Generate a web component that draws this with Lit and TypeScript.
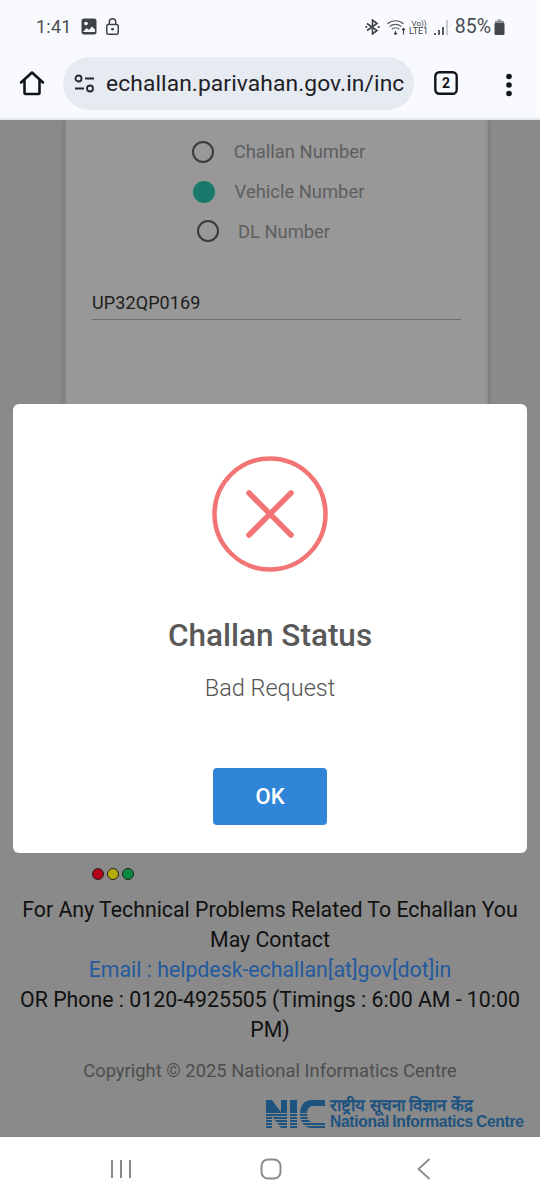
import { LitElement, html, css, svg } from "lit";
import { customElement } from "lit/decorators.js";

@customElement("app-root")
export class AppRoot extends LitElement {
  static styles = css`
    :host { display: block; width: 540px; height: 1200px; font-family: Roboto, sans-serif; background: #fff; overflow: hidden; }
    .app { display: flex; flex-direction: column; height: 1200px; }
    .status { height: 50px; background: #f8fafe; display: flex; align-items: center; justify-content: space-between; padding: 3px 35px 0 36px; color: #4a4d52; box-sizing: border-box; flex: none; font-size: 18px; }
    .status .l, .status .r { display: flex; align-items: center; }
    .status .time { font-size: 18px; letter-spacing: .2px; margin-right: 9px; }
    .status .pct { font-size: 19.5px; margin: 0 3px 0 7px; }
    .status svg { display: block; }
    .toolbar { height: 70px; background: #f8fafe; display: flex; align-items: flex-start; flex: none; box-sizing: border-box; border-bottom: 2px solid #e4e7ec; }
    .toolbar .home { margin: 20px 0 0 19px; }
    .pill { margin: 7px 0 0 18px; width: 351px; height: 53px; border-radius: 27px; background: #e6eaf1; display: flex; align-items: center; box-sizing: border-box; padding: 0 9px 0 11px; overflow: hidden; }
    .pill span { font-size: 22.8px; color: #1e2126; white-space: nowrap; margin-left: 11px; overflow: hidden; letter-spacing: .1px; }
    .tabs { margin: 21px 0 0 20px; }
    .dots { margin: 23px 0 0 47px; }
    .page { flex: 1; background: #898a89; display: flex; flex-direction: column; align-items: center; position: relative; overflow: hidden; min-height: 0; }
    .card { width: 423px; height: 560px; flex: none; background: #989898; border-left: 2px solid #8e8f8e; border-right: 2px solid #8e8f8e; box-sizing: border-box; box-shadow: 0 0 5px rgba(0,0,0,.22); padding: 12px 25px 0 25px; margin-left: 13px; }
    .radios { display: flex; flex-direction: column; align-items: center; height: 119px; }
    .radio { height: 39.7px; display: flex; align-items: center; font-size: 18.4px; color: #5e5e5e; }
    .circle { width: 22px; height: 22px; box-sizing: border-box; border: 2.5px solid #3a3a3a; border-radius: 50%; margin-right: 20px; flex: none; }
    .circle.on { background: #18796c; border: none; }
    .r1 { margin-left: 4px; } .r2 { margin-left: 4px; } .r3 { margin-right: 26px; }
    .r3 .circle { margin-right: 19px; }
    .field { margin-top: 35px; height: 33px; border-bottom: 1px solid #6e6e6e; font-size: 18px; color: #1d1d1d; line-height: 34px; letter-spacing: .1px; width: 369px; }
    .lights { position: absolute; top: 748px; left: 92px; display: flex; gap: 3px; }
    .light { border-radius: 50%; border: 1px solid #222; width: 10px; height: 10px; }
    .footer { position: absolute; top: 775px; left: 0; right: 0; text-align: center; font-size: 21.3px; line-height: 30px; color: #111; padding: 0 16px; box-sizing: border-box; }
    .link { color: #245a9f; }
    .copy { margin-top: 11px; font-size: 18.4px; color: #4d4d4d; }
    .nic { position: absolute; left: 266px; top: 978px; display: flex; align-items: center; color: #1e5380; }
    .nic .t { margin-left: 5px; font-weight: 700; font-family: "Liberation Sans", sans-serif; }
    .nic .hi { font-size: 16.7px; white-space: nowrap; font-weight: 700; height: 16px; line-height: 16px; }
    .nic .en { font-size: 15.6px; letter-spacing: -.3px; word-spacing: -1px; white-space: nowrap; line-height: 16px; }
    .modal { position: absolute; left: 13px; top: 284px; width: 514px; height: 449px; background: #fff; border-radius: 6px; box-sizing: border-box; display: flex; flex-direction: column; align-items: center; padding-top: 52px; }
    .modal h2 { margin: 46px 0 0; font-size: 31.5px; line-height: 36px; font-weight: 500; color: #595959; }
    .modal p { margin: 19px 0 0; font-size: 23.5px; line-height: 30px; font-weight: 300; color: #545454; }
    .ok { margin-top: 65px; width: 114px; height: 57px; background: #3085d6; border-radius: 4px; color: #fff; font-size: 22px; font-weight: 500; display: flex; align-items: center; justify-content: center; }
    .nav { height: 63px; flex: none; background: #fff; display: flex; align-items: center; padding: 0 0 0 110px; box-sizing: border-box; }
    .nav svg { display: block; }
    .nav .c { margin-left: 128px; } .nav .b { margin-left: 135px; }
  `;

  render() {
    return html`<div class="app">
      <div class="status">
        <div class="l"><span class="time">1:41</span>
          <svg width="16" height="17" viewBox="0 0 16 17" style="margin-right:9px"><rect x="0.5" y="0.5" width="15" height="16" rx="2.5" fill="#3f4246"/><circle cx="5" cy="5.5" r="1.8" fill="#f8fafe"/><path d="M2 14l3.5-4 2.5 2 3-3.5 3 3V14z" fill="#f8fafe"/></svg>
          <svg width="13" height="17" viewBox="0 0 13 17"><rect x="0.8" y="6.5" width="11.4" height="9.7" rx="1.5" fill="none" stroke="#3f4246" stroke-width="1.5"/><path d="M3.3 6.5V4a3.2 3.2 0 0 1 6.4 0v2.5" fill="none" stroke="#3f4246" stroke-width="1.5"/><circle cx="6.5" cy="11.2" r="1.4" fill="#3f4246"/></svg>
        </div>
        <div class="r">
          <svg width="15" height="16" viewBox="0 0 15 16" style="margin-right:7px"><path d="M2 4.5l10 7-4.5 3.5V1L12 4.5l-10 7" fill="none" stroke="#3f4246" stroke-width="1.6"/><circle cx="1.3" cy="8" r="1.1" fill="#3f4246"/><circle cx="13.7" cy="8" r="1.1" fill="#3f4246"/></svg>
          <svg width="20" height="16" viewBox="0 0 20 16"><path d="M0.5 4.8a12 12 0 0 1 16 0M2.5 7.6a9 9 0 0 1 12 0M4.8 10.2a5.5 5.5 0 0 1 7.4 0" fill="none" stroke="#5a5d62" stroke-width="1.2"/><path d="M8.5 12v3.5M7 14l1.5 1.5L10 14M16.5 15.5v-6M15 11l1.5-1.5L18 11" fill="none" stroke="#3f4246" stroke-width="1.1"/></svg>
          <svg width="21" height="17" viewBox="0 0 21 17" style="margin-left:2px"><text x="2.5" y="7.5" font-size="8" fill="#3f4246" font-family="Roboto">Vo))</text><text x="0" y="16" font-size="9" fill="#3f4246" font-family="Roboto">LTE1</text></svg>
          <svg width="14" height="16" viewBox="0 0 14 16" style="margin-left:4px"><path d="M1 16v-2M5 16v-5M9 16V8" stroke="#3f4246" stroke-width="1.7" fill="none"/><path d="M13 16V1" stroke="#a9acb1" stroke-width="1.2" fill="none"/></svg>
          <span class="pct">85%</span>
          <svg width="11" height="16" viewBox="0 0 11 16"><path d="M3.5 0.5h4V2h-4z" fill="#8d9095"/><path d="M1 2h9v3H1z" fill="#8d9095"/><rect x="0.5" y="4" width="10" height="12" rx="1" fill="#45484c"/></svg>
        </div>
      </div>
      <div class="toolbar">
        <svg class="home" width="26" height="26" viewBox="0 0 26 26"><path d="M2 12.5L13 2.5l11 10M5.5 10v13a1 1 0 0 0 1 1h13a1 1 0 0 0 1-1V10" fill="none" stroke="#111418" stroke-width="2.6" stroke-linecap="round" stroke-linejoin="round"/></svg>
        <div class="pill">
          <svg width="21" height="20" viewBox="0 0 21 20"><circle cx="4.5" cy="4.5" r="3" fill="none" stroke="#24272c" stroke-width="1.8"/><path d="M11 4.5h9M1 14.5h9" stroke="#24272c" stroke-width="1.8" fill="none"/><circle cx="16" cy="14.5" r="3" fill="none" stroke="#24272c" stroke-width="1.8"/></svg>
          <span>echallan.parivahan.gov.in/inc</span>
        </div>
        <svg class="tabs" width="24" height="24" viewBox="0 0 24 24"><rect x="1.3" y="1.3" width="21.4" height="21.4" rx="4" fill="none" stroke="#111418" stroke-width="2.4"/><text x="12" y="17" text-anchor="middle" font-size="14" font-weight="700" fill="#111418" font-family="Roboto">2</text></svg>
        <svg class="dots" width="8" height="24" viewBox="0 0 8 24"><circle cx="4" cy="3.5" r="2.8" fill="#111418"/><circle cx="4" cy="12" r="2.8" fill="#111418"/><circle cx="4" cy="20.5" r="2.8" fill="#111418"/></svg>
      </div>
      <div class="page">
        <div class="card">
          <div class="radios">
            <div class="radio r1"><div class="circle"></div>Challan Number</div>
            <div class="radio r2"><div class="circle on"></div>Vehicle Number</div>
            <div class="radio r3"><div class="circle"></div>DL Number</div>
          </div>
          <div class="field">UP32QP0169</div>
        </div>
        <div class="lights">
          <div class="light" style="background:#b3001b"></div>
          <div class="light" style="background:#b5ab0c"></div>
          <div class="light" style="background:#0a8a3e"></div>
        </div>
        <div class="footer">
          For Any Technical Problems Related To Echallan You May Contact<br>
          <span class="link">Email : helpdesk-echallan[at]gov[dot]in</span><br>
          OR Phone : 0120-4925505 (Timings : 6:00 AM - 10:00 PM)
          <div class="copy">Copyright © 2025 National Informatics Centre</div>
        </div>
        <div class="nic">
          <svg width="59" height="30" viewBox="0 0 59 30">
            <path d="M0 1h6l9 12V1h6v28h-6L6 17v12H0zM24 1h7v28h-7zM59 1h-13c-8 0-12 6-12 14s4 14 12 14h13v-6H47c-4 0-6-3-6-8s2-8 6-8h12z" fill="#1e5380"/>
            ${[14, 17, 20, 23, 26].map((y) => svg`<rect x="0" y="${y}" width="59" height="1" fill="#898a89"/>`)}
          </svg>
          <div class="t"><div class="hi" lang="hi">राष्ट्रीय सूचना विज्ञान केंद्र</div><div class="en">National Informatics Centre</div></div>
        </div>
        <div class="modal">
          <svg width="116" height="116" viewBox="0 0 116 116" style="flex:none"><circle cx="58" cy="58" r="55.5" fill="none" stroke="#f27474" stroke-width="4.5"/><path d="M37 37l42 42M79 37L37 79" stroke="#f27474" stroke-width="5.5" stroke-linecap="round"/></svg>
          <h2>Challan Status</h2>
          <p>Bad Request</p>
          <div class="ok">OK</div>
        </div>
      </div>
      <div class="nav">
        <svg width="22" height="20" viewBox="0 0 22 20"><path d="M2 1v18M11 1v18M20 1v18" stroke="#8a8a8a" stroke-width="2" fill="none"/></svg>
        <svg class="c" width="22" height="22" viewBox="0 0 22 22"><rect x="1.5" y="1.5" width="19" height="19" rx="6.5" fill="none" stroke="#8a8a8a" stroke-width="2"/></svg>
        <svg class="b" width="14" height="22" viewBox="0 0 14 22"><path d="M12.5 1L1.5 11l11 10" stroke="#8a8a8a" stroke-width="1.8" fill="none"/></svg>
      </div>
    </div>`;
  }
}
